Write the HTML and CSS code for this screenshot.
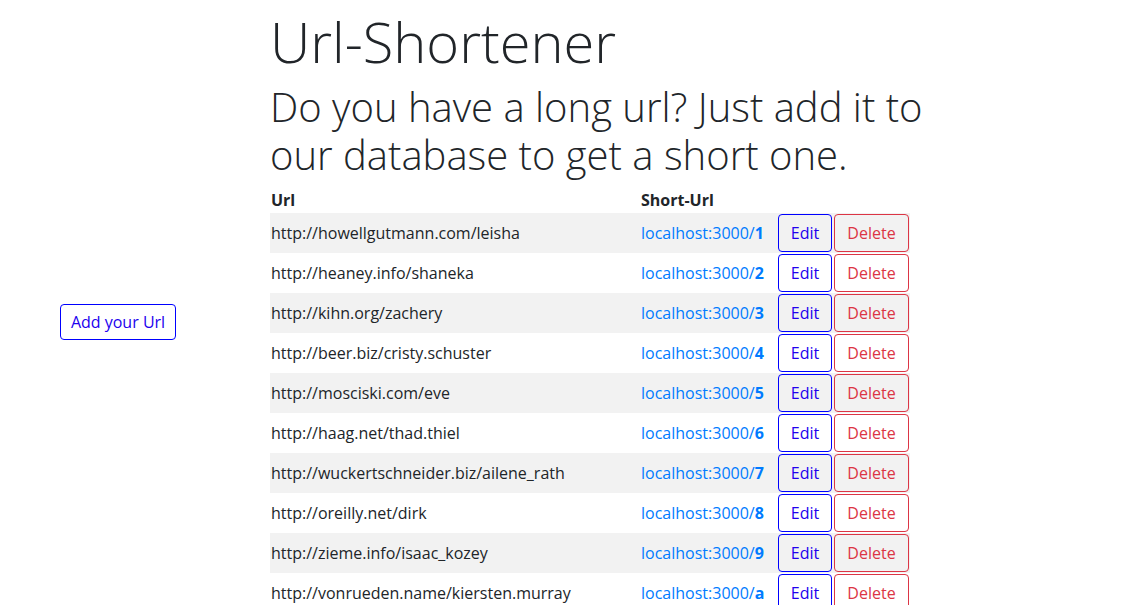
FILE: index.html
```html
<!DOCTYPE html>
<html>
<head>
<meta charset="utf-8">
<link rel="stylesheet" href="styles.css">
</head>
<body>
<div class="page">
  <aside class="side">
    <button class="btn btn-add">Add your Url</button>
  </aside>
  <main class="main">
    <h1 class="title">Url-Shortener</h1>
    <h2 class="subtitle">Do you have a long url? Just add it to our database to get a short one.</h2>
    <table class="urls">
      <colgroup>
        <col class="c-url"><col class="c-short"><col class="c-edit"><col class="c-del">
      </colgroup>
      <thead>
        <tr><th>Url</th><th>Short-Url</th><th></th><th></th></tr>
      </thead>
      <tbody>
        <tr><td>http://howellgutmann.com/leisha</td><td><a class="short">localhost:3000/<b>1</b></a></td><td><button class="btn btn-edit">Edit</button></td><td><button class="btn btn-del">Delete</button></td></tr>
        <tr><td>http://heaney.info/shaneka</td><td><a class="short">localhost:3000/<b>2</b></a></td><td><button class="btn btn-edit">Edit</button></td><td><button class="btn btn-del">Delete</button></td></tr>
        <tr><td>http://kihn.org/zachery</td><td><a class="short">localhost:3000/<b>3</b></a></td><td><button class="btn btn-edit">Edit</button></td><td><button class="btn btn-del">Delete</button></td></tr>
        <tr><td>http://beer.biz/cristy.schuster</td><td><a class="short">localhost:3000/<b>4</b></a></td><td><button class="btn btn-edit">Edit</button></td><td><button class="btn btn-del">Delete</button></td></tr>
        <tr><td>http://mosciski.com/eve</td><td><a class="short">localhost:3000/<b>5</b></a></td><td><button class="btn btn-edit">Edit</button></td><td><button class="btn btn-del">Delete</button></td></tr>
        <tr><td>http://haag.net/thad.thiel</td><td><a class="short">localhost:3000/<b>6</b></a></td><td><button class="btn btn-edit">Edit</button></td><td><button class="btn btn-del">Delete</button></td></tr>
        <tr><td>http://wuckertschneider.biz/ailene_rath</td><td><a class="short">localhost:3000/<b>7</b></a></td><td><button class="btn btn-edit">Edit</button></td><td><button class="btn btn-del">Delete</button></td></tr>
        <tr><td>http://oreilly.net/dirk</td><td><a class="short">localhost:3000/<b>8</b></a></td><td><button class="btn btn-edit">Edit</button></td><td><button class="btn btn-del">Delete</button></td></tr>
        <tr><td>http://zieme.info/isaac_kozey</td><td><a class="short">localhost:3000/<b>9</b></a></td><td><button class="btn btn-edit">Edit</button></td><td><button class="btn btn-del">Delete</button></td></tr>
        <tr><td>http://vonrueden.name/kiersten.murray</td><td><a class="short">localhost:3000/<b>a</b></a></td><td><button class="btn btn-edit">Edit</button></td><td><button class="btn btn-del">Delete</button></td></tr>
      </tbody>
    </table>
  </main>
</div>
</body>
</html>
```

FILE: styles.css
```css
html, body {
  margin: 0;
  padding: 0;
  background: #fff;
}
body {
  font-family: "Open Sans", "Noto Sans", sans-serif;
  font-size: 16px;
  line-height: 1.5;
  color: #212529;
}
.page {
  display: flex;
  align-items: flex-start;
}
.side {
  width: 255px;
  flex: none;
  padding-top: 304px;
  padding-left: 60px;
  box-sizing: border-box;
}
.main {
  width: 680px;
  margin-left: 15px;
  padding-top: 8px;
}
.title {
  font-size: 56px;
  font-weight: 300;
  line-height: 1.2;
  margin: 0 0 8px;
}
.subtitle {
  font-size: 40px;
  font-weight: 300;
  line-height: 1.2;
  margin: 0 0 8px;
}
.urls {
  width: 640px;
  border-collapse: collapse;
  table-layout: fixed;
}
.c-url { width: 370px; }
.c-short { width: 137px; }
.c-edit { width: 56px; }
.c-del { width: 77px; }
.urls th {
  text-align: left;
  font-weight: 700;
  padding: 1px;
  line-height: 24px;
}
.urls td {
  padding: 1px;
  white-space: nowrap;
  vertical-align: middle;
}
.urls tbody tr:nth-child(odd) {
  background: #f2f2f2;
}
.short {
  color: #007bff;
  text-decoration: none;
}
.short b {
  font-weight: 700;
}
.btn {
  font-family: inherit;
  font-size: 16px;
  line-height: 24px;
  padding: 6px 0;
  border-radius: 4px;
  background: transparent;
  border: 1px solid;
  display: inline-block;
  text-align: center;
  cursor: pointer;
}
.btn-add, .btn-edit {
  color: #2200ee;
  border-color: #0000ff;
}
.btn-add {
  width: 116px;
  padding: 5px 0;
}
.btn-edit {
  width: 54px;
}
.btn-del {
  width: 75px;
  color: #dc3545;
  border-color: #dc3545;
}
```
